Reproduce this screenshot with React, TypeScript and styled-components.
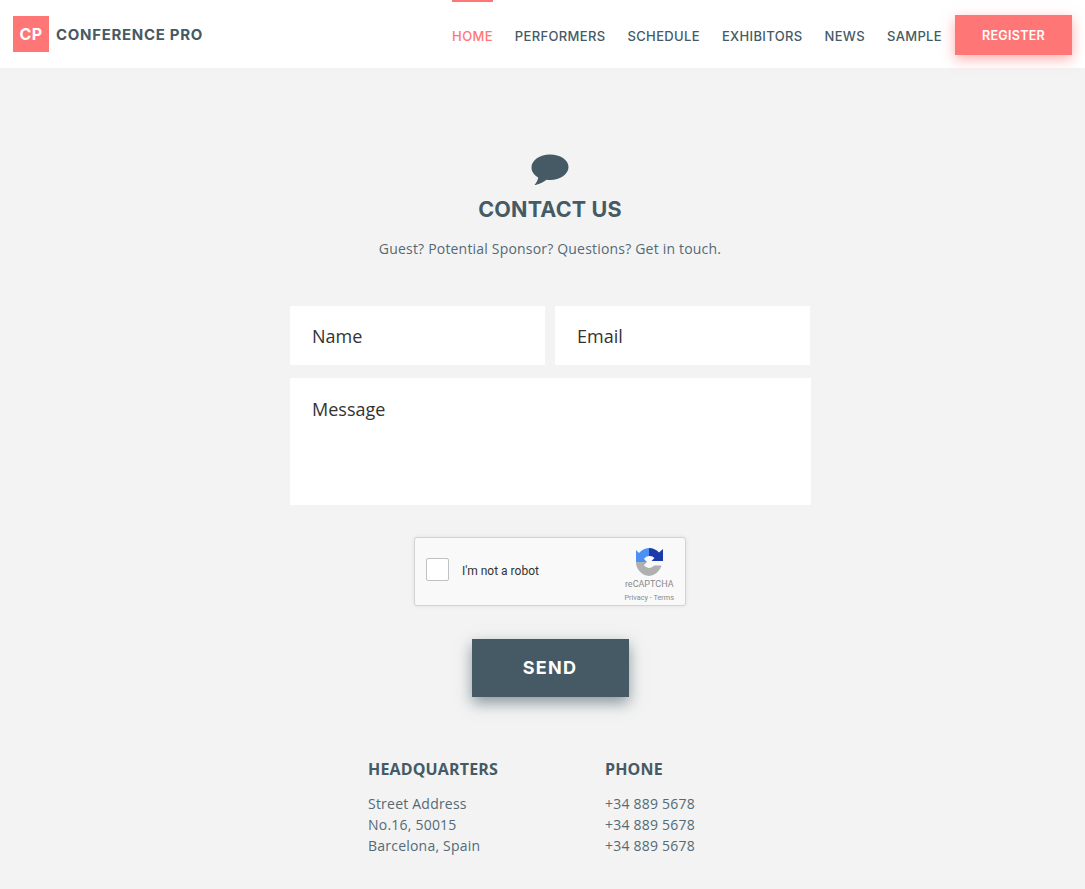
import React from 'react';
import styled, { createGlobalStyle } from 'styled-components';

const GlobalStyle = createGlobalStyle`
  html, body {
    margin: 0;
    padding: 0;
    background: #f3f3f3;
    font-family: 'Open Sans', 'Liberation Sans', sans-serif;
    overflow-x: hidden;
  }
  * { box-sizing: border-box; }
`;

const coral = '#ff7676';
const slate = '#455a64';
const muted = '#546a75';
const heading = "Inter, 'Liberation Sans', sans-serif";

const Header = styled.header`
  display: flex;
  align-items: center;
  justify-content: space-between;
  height: 68px;
  padding: 0 13px;
  background: #fff;
`;

const Logo = styled.div`
  display: flex;
  align-items: center;
  gap: 7px;
`;

const LogoMark = styled.span`
  display: flex;
  align-items: center;
  justify-content: center;
  width: 36px;
  height: 36px;
  background: ${coral};
  color: #fff;
  font: 700 16px ${heading};
  letter-spacing: 0.3px;
`;

const LogoText = styled.span`
  color: ${slate};
  font: 700 15px ${heading};
  letter-spacing: 0.7px;
`;

const Nav = styled.nav`
  display: flex;
  align-items: center;
  gap: 22px;
  height: 100%;
`;

const NavLink = styled.a<{ $active?: boolean }>`
  position: relative;
  display: flex;
  align-items: center;
  height: 100%;
  padding-top: 4px;
  color: ${p => (p.$active ? coral : slate)};
  font: 500 13px ${heading};
  letter-spacing: 0.345px;

  &::before {
    content: '';
    position: absolute;
    top: 0;
    left: 0;
    right: 0;
    height: 2px;
    background: ${p => (p.$active ? coral : 'transparent')};
  }
`;

const RegisterButton = styled.button`
  width: 117px;
  height: 40px;
  margin-left: -9px;
  margin-top: 2px;
  border: 0;
  background: ${coral};
  color: #fff;
  font: 600 12.5px ${heading};
  letter-spacing: 0.3px;
  box-shadow: 0 4px 12px rgba(255, 118, 118, 0.6);
`;

const Main = styled.main`
  display: flex;
  flex-direction: column;
  align-items: center;
  padding: 86px 0 33px 15px;
`;

const ContactIcon = styled.svg`
  display: block;
  width: 38px;
  height: 33px;
  fill: ${slate};
`;

const Title = styled.h1`
  margin: 7px 0 0;
  color: ${slate};
  font: 700 21.5px/30px ${heading};
  letter-spacing: 0.2px;
`;

const Lead = styled.p`
  margin: 14px 0 0;
  color: ${muted};
  font-size: 14px;
  line-height: 22px;
  letter-spacing: 0.19px;
`;

const ContactForm = styled.form`
  display: grid;
  grid-template-columns: 255px 256px;
  column-gap: 10px;
  row-gap: 13px;
  width: 521px;
  margin: 46px 0 0 1px;
`;

const Field = styled.input`
  width: 255px;
  height: 59px;
  padding: 0 22px;
  border: 0;
  outline: 0;
  background: #fff;
  font: 18px 'Open Sans', sans-serif;

  &::placeholder { color: #333; opacity: 1; }
`;

const MessageField = styled.textarea`
  grid-column: 1 / -1;
  height: 127px;
  padding: 19px 22px;
  border: 0;
  outline: 0;
  resize: none;
  background: #fff;
  font: 18px/24px 'Open Sans', sans-serif;

  &::placeholder { color: #333; opacity: 1; }
`;

const Captcha = styled.div`
  display: flex;
  align-items: center;
  width: 272px;
  height: 69px;
  margin-top: 32px;
  padding: 0 11px;
  background: #f9f9f9;
  border: 1px solid #d3d3d3;
  border-radius: 3px;
  box-shadow: 0 0 4px rgba(0, 0, 0, 0.08);
`;

const CaptchaBox = styled.span`
  width: 23px;
  height: 23px;
  margin-bottom: 4px;
  background: #fff;
  border: 1px solid #c1c1c1;
  border-radius: 2px;
`;

const CaptchaLabel = styled.span`
  margin: 0 0 2px 13px;
  color: #333;
  font: 12px Roboto, sans-serif;
`;

const CaptchaBrand = styled.div`
  display: flex;
  flex-direction: column;
  align-items: center;
  align-self: flex-start;
  margin-left: auto;
  padding-top: 10px;
  color: #8a8a8a;
  font-family: Roboto, sans-serif;
`;

const CaptchaLogo = styled.svg`
  display: block;
  width: 28px;
  height: 28px;
`;

const CaptchaName = styled.span`
  margin-top: 3px;
  font-size: 9px;
  line-height: 11px;
`;

const CaptchaLinks = styled.span`
  margin-top: 3px;
  font-size: 7.3px;
  line-height: 10px;
`;

const SendButton = styled.button`
  width: 157px;
  height: 58px;
  margin-top: 33px;
  padding: 0 0 2px;
  border: 0;
  background: ${slate};
  color: #fff;
  font: 700 18px ${heading};
  letter-spacing: 1.3px;
  box-shadow: 0 6px 14px rgba(69, 90, 100, 0.6);
`;

const Details = styled.section`
  display: grid;
  grid-template-columns: 237px 127px;
  margin-top: 60px;
`;

const DetailHeading = styled.h3`
  margin: 0 0 12px;
  color: ${slate};
  font-size: 16px;
  font-weight: 700;
  line-height: 24px;
  letter-spacing: 0.15px;
`;

const DetailLine = styled.div`
  color: ${muted};
  font-size: 14px;
  line-height: 21px;
  letter-spacing: 0.22px;
`;

const navItems = ['PERFORMERS', 'SCHEDULE', 'EXHIBITORS', 'NEWS', 'SAMPLE'];

export default function App() {
  return (
    <>
      <GlobalStyle />
      <Header>
        <Logo>
          <LogoMark>CP</LogoMark>
          <LogoText>CONFERENCE PRO</LogoText>
        </Logo>
        <Nav>
          <NavLink $active>HOME</NavLink>
          {navItems.map(item => (
            <NavLink key={item}>{item}</NavLink>
          ))}
          <RegisterButton>REGISTER</RegisterButton>
        </Nav>
      </Header>
      <Main>
        <ContactIcon viewBox="0 0 38 33">
          <path d="M19 .5C8.800.5.500 6.300.500 13.500c0 4 2.500 7.500 6.700 10-.3 2.500-1.500 4.800-3.200 6.700-.4.500-.1 1 .5.800 4.500-1 8.500-3.200 11-5.200 1.200.2 2.300.2 3.500.2 10.200 0 18.500-5.800 18.500-13S29.200.5 19 .5z" />
        </ContactIcon>
        <Title>CONTACT US</Title>
        <Lead>Guest? Potential Sponsor? Questions? Get in touch.</Lead>
        <ContactForm>
          <Field placeholder="Name" />
          <Field placeholder="Email" />
          <MessageField placeholder="Message" />
        </ContactForm>
        <Captcha>
          <CaptchaBox />
          <CaptchaLabel>I'm not a robot</CaptchaLabel>
          <CaptchaBrand>
            <CaptchaLogo viewBox="0 0 28 28">
              <path fill="#4a90f5" d="M14 0A14 14 0 0 0 4 5L1 2v12h11l-3-3a6 6 0 0 1 5-3z" />
              <path fill="#1c3aa9" d="M14 0a14 14 0 0 1 10 4.500L28 1v12H16.500l3-3A6 6 0 0 0 14 8z" />
              <path fill="#b0b0b0" d="M1 14h11l-3 3a6 6 0 0 0 10 .5h7.500A14 14 0 0 1 14 28 14 14 0 0 1 1 14z" />
            </CaptchaLogo>
            <CaptchaName>reCAPTCHA</CaptchaName>
            <CaptchaLinks>Privacy - Terms</CaptchaLinks>
          </CaptchaBrand>
        </Captcha>
        <SendButton type="button">SEND</SendButton>
        <Details>
          <div>
            <DetailHeading>HEADQUARTERS</DetailHeading>
            <DetailLine>Street Address</DetailLine>
            <DetailLine>No.16, 50015</DetailLine>
            <DetailLine>Barcelona, Spain</DetailLine>
          </div>
          <div>
            <DetailHeading>PHONE</DetailHeading>
            <DetailLine>+34 889 5678</DetailLine>
            <DetailLine>+34 889 5678</DetailLine>
            <DetailLine>+34 889 5678</DetailLine>
          </div>
        </Details>
      </Main>
    </>
  );
}
